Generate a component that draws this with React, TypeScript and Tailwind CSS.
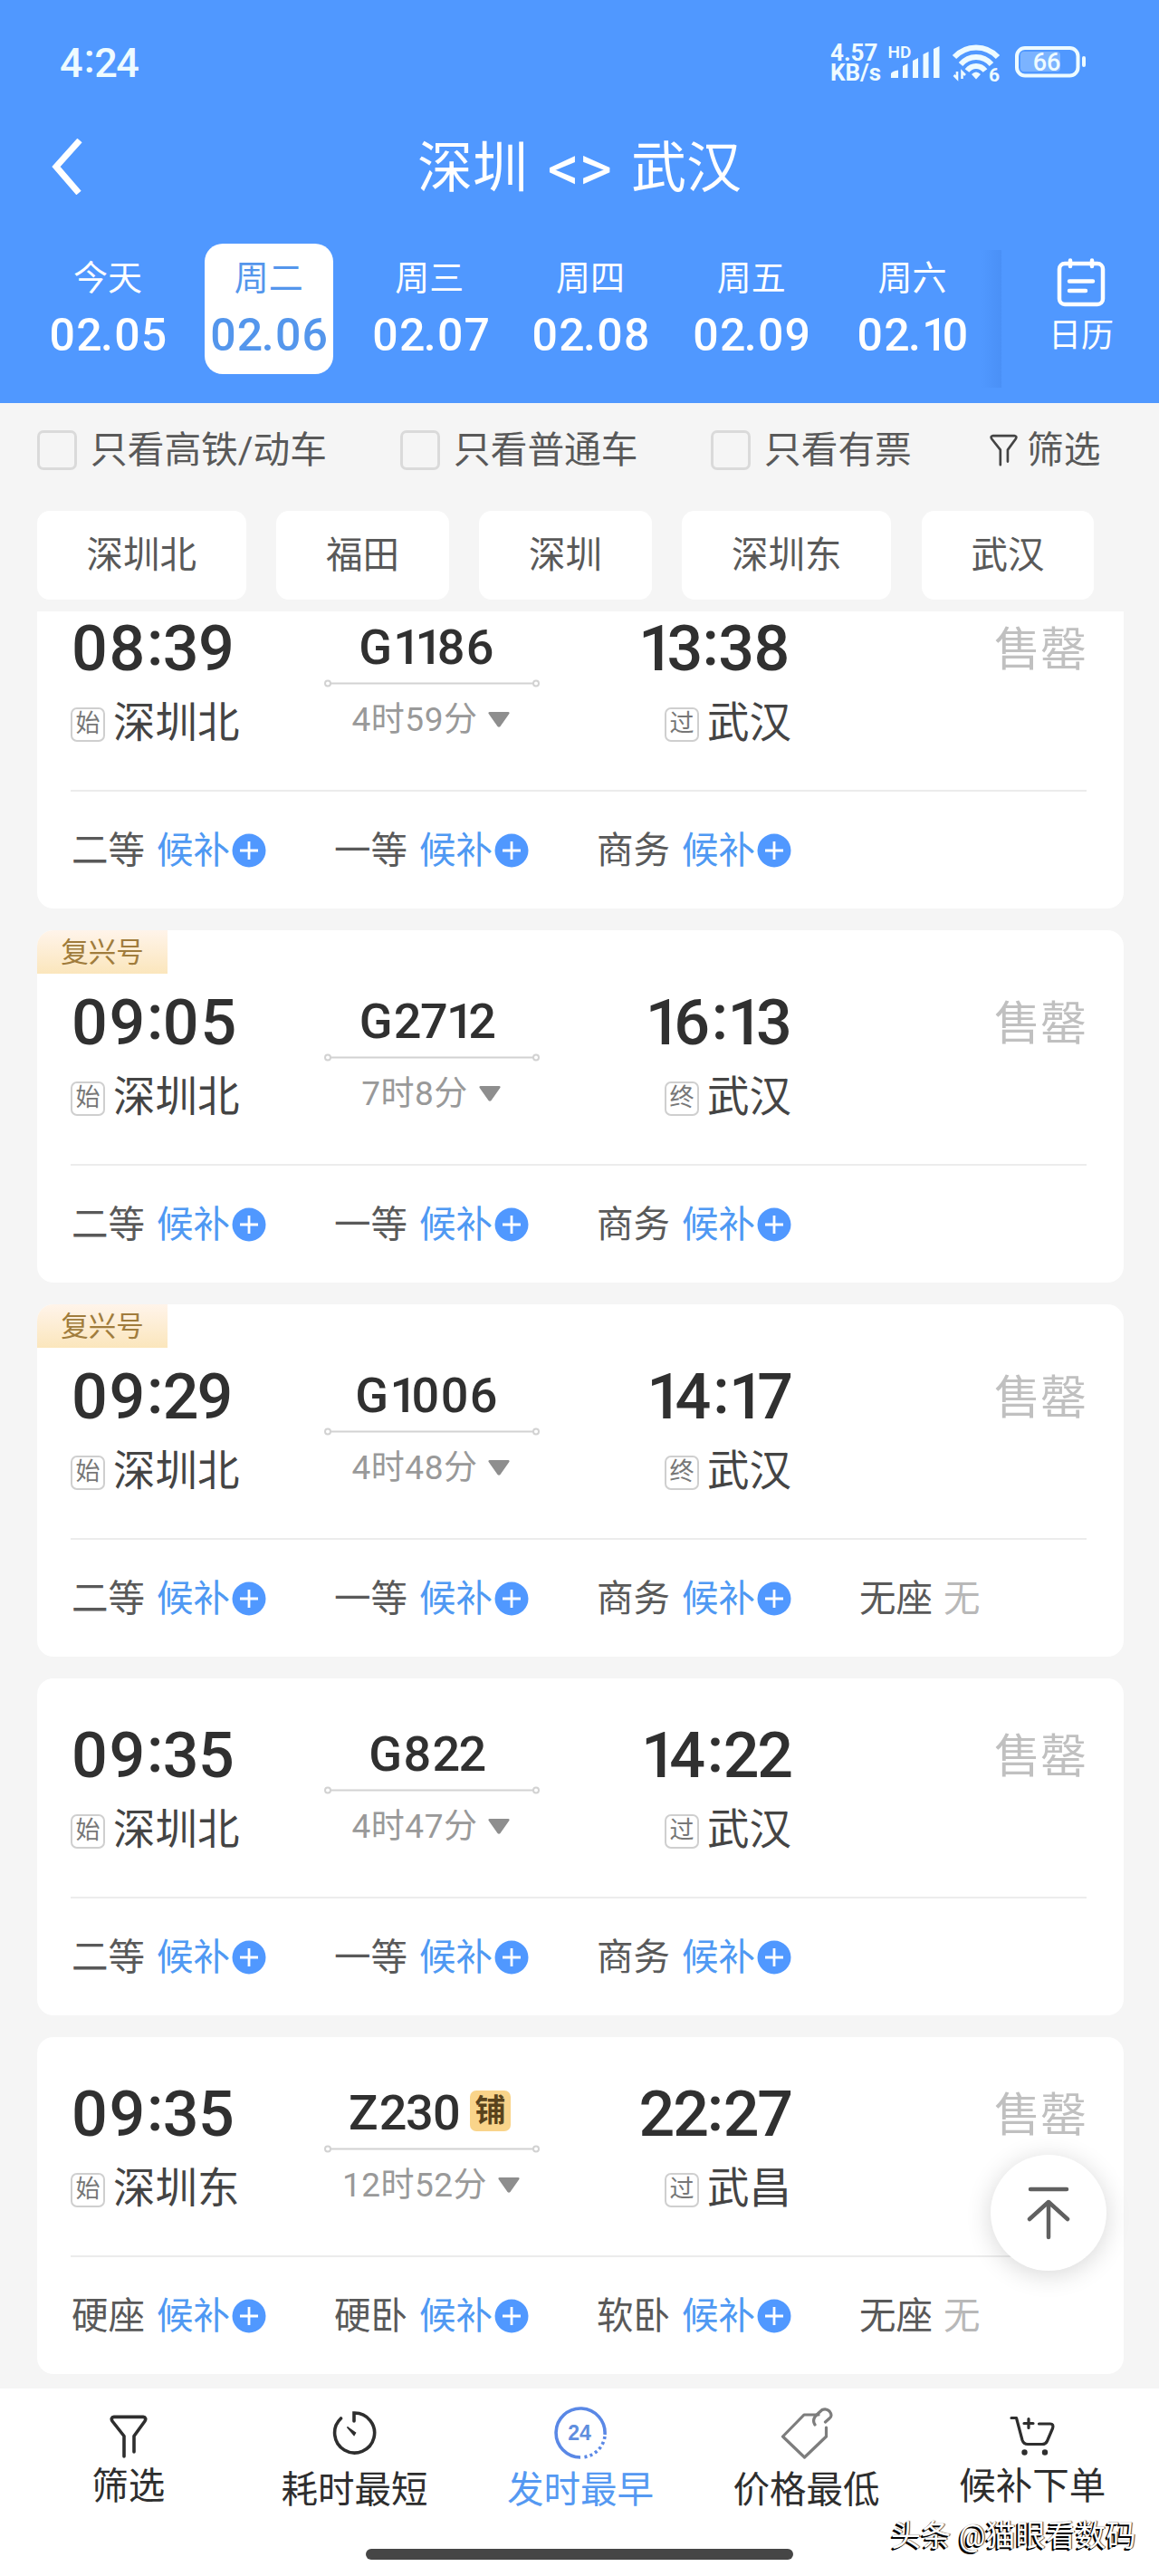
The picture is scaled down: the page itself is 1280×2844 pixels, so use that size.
import clsx from 'clsx';

const DATES = [
  { week: '今天', day: '02.05' },
  { week: '周二', day: '02.06' },
  { week: '周三', day: '02.07' },
  { week: '周四', day: '02.08' },
  { week: '周五', day: '02.09' },
  { week: '周六', day: '02.10' },
];

const STATIONS = ['深圳北', '福田', '深圳', '深圳东', '武汉'];

type Seat = { name: string; none?: boolean };

type Train = {
  no: string;
  depart: string;
  arrive: string;
  from: string;
  to: string;
  toTag: string;
  duration: string;
  fuxing?: boolean;
  sleeper?: boolean;
  seats: Seat[];
};

const HIGH_SPEED_SEATS: Seat[] = [{ name: '二等' }, { name: '一等' }, { name: '商务' }];

const TRAINS: Train[] = [
  {
    no: 'G1186',
    depart: '08:39',
    arrive: '13:38',
    from: '深圳北',
    to: '武汉',
    toTag: '过',
    duration: '4时59分',
    seats: HIGH_SPEED_SEATS,
  },
  {
    no: 'G2712',
    depart: '09:05',
    arrive: '16:13',
    from: '深圳北',
    to: '武汉',
    toTag: '终',
    duration: '7时8分',
    fuxing: true,
    seats: HIGH_SPEED_SEATS,
  },
  {
    no: 'G1006',
    depart: '09:29',
    arrive: '14:17',
    from: '深圳北',
    to: '武汉',
    toTag: '终',
    duration: '4时48分',
    fuxing: true,
    seats: [...HIGH_SPEED_SEATS, { name: '无座', none: true }],
  },
  {
    no: 'G822',
    depart: '09:35',
    arrive: '14:22',
    from: '深圳北',
    to: '武汉',
    toTag: '过',
    duration: '4时47分',
    seats: HIGH_SPEED_SEATS,
  },
  {
    no: 'Z230',
    depart: '09:35',
    arrive: '22:27',
    from: '深圳东',
    to: '武昌',
    toTag: '过',
    duration: '12时52分',
    sleeper: true,
    seats: [{ name: '硬座' }, { name: '硬卧' }, { name: '软卧' }, { name: '无座', none: true }],
  },
];

// Proportional numerals: 1, 2, 3 and 7 are set tighter than the round ones,
// and the colon is centred on the digits.
const GLYPHS: Record<string, string> = {
  '1': 'tracking-[-0.12em]',
  '2': 'tracking-[-0.03em]',
  '3': 'tracking-[-0.01em]',
  '7': 'tracking-[-0.03em]',
  ':': 'relative -top-[0.09em] inline-block leading-[0.6] tracking-[-0.01em]',
};

function Digits({ value }: { value: string }) {
  return (
    <span className="tracking-[0.025em]">
      {value.split(/([1237:])/).map((part, i) =>
        GLYPHS[part] ? (
          <span key={i} className={GLYPHS[part]}>
            {part}
          </span>
        ) : (
          part
        ),
      )}
    </span>
  );
}

function FunnelIcon({ className }: { className?: string }) {
  return (
    <svg
      viewBox="0 0 42 48"
      fill="none"
      stroke="currentColor"
      strokeWidth="3.6"
      strokeLinecap="round"
      strokeLinejoin="round"
      className={className}
    >
      <path d="M16 46V23.5L3 7Q0.8 3 5 2.4H37Q41.2 3 39 7L27 23.5V41" />
    </svg>
  );
}

function StatusIcons() {
  return (
    <svg viewBox="976 44 226 50" className="h-[50px] w-[226px] text-[#eefbff]" fill="currentColor">
      <text x="980.500" y="63.500" fontSize="19" fontWeight="600">
        HD
      </text>
      <path d="M984 86V81Q986 78 992 77.500V86ZM997 86V73L1002.500 70V86ZM1008 86V67L1014 64V86ZM1019.500 86V60L1025.500 57V86ZM1031 86V54L1037.500 51V86Z" />
      <g fill="none" stroke="currentColor" strokeWidth="6">
        <path d="M1054 63Q1064 52.500 1078 52.500T1102 63" />
        <path d="M1061 71Q1068 63 1078 63T1095 71" />
        <path d="M1068 78Q1072 73 1078 73T1088 78" />
      </g>
      <path d="M1073 82Q1078 77 1083 82L1078 87.500Z" />
      <path d="M1057 79V86.500L1053.500 83M1062.500 87V79.500L1066 83" fill="none" stroke="currentColor" strokeWidth="2.600" />
      <text x="1092" y="89.500" fontSize="21" fontWeight="700">
        6
      </text>
      <rect x="1127" y="57" width="44" height="22" rx="4" opacity="0.28" />
      <rect x="1123" y="53" width="67.500" height="30.500" rx="9" fill="none" stroke="currentColor" strokeWidth="4" />
      <rect x="1195" y="62" width="4" height="12" rx="2" />
      <text x="1156" y="78" fontSize="27" fontWeight="500" textAnchor="middle">
        66
      </text>
    </svg>
  );
}

function Header() {
  return (
    <header className="h-[445px] bg-[#5098ff] text-white">
      <div className="flex h-[138px] items-center pl-[66px] text-[#eefbff]">
        <span className="w-[851px] text-[45px] leading-none font-medium">
          <Digits value="4:24" />
        </span>
        <div className="w-[59px] text-[26px] leading-[22px] font-bold">
          <div>4.57</div>
          <div>KB/s</div>
        </div>
        <StatusIcons />
      </div>

      <div className="flex h-[92px] items-center">
        <svg
          viewBox="0 0 36 62"
          fill="none"
          stroke="currentColor"
          strokeWidth="7"
          className="ml-[56px] h-[62px] w-[36px]"
        >
          <path d="M32 2L6 31L31 60" />
        </svg>
        <h1 className="mt-[3px] ml-[369px] flex items-center text-[61px] leading-[80px] whitespace-nowrap">
          <span>深圳</span>
          <span className="ml-[20px] flex h-[80px] w-[74px] items-center justify-center text-[70px] tracking-[-0.5px]">
            &lt;&gt;
          </span>
          <span className="ml-[20px]">武汉</span>
        </h1>
      </div>

      <div className="flex">
        <div className="flex w-[1106px] gap-[35.700px] pt-[39px] pl-[48px]">
          {DATES.map((d, i) => (
            <div
              key={d.day}
              className={clsx(
                'flex h-[144px] w-[142px] shrink-0 flex-col items-center rounded-[20px] pt-[13px] whitespace-nowrap',
                i === 1 && 'bg-white text-[#5496ec]',
              )}
            >
              <span className="text-[38px] leading-[50px]">{d.week}</span>
              <span className="mt-[8px] ml-[2px] text-[50px] leading-[60px] font-medium">
                <Digits value={d.day} />
              </span>
            </div>
          ))}
        </div>
        <div className="mt-[46px] -ml-[22px] h-[152px] w-[22px] bg-linear-to-r from-[#5098ff] to-[#4a90f6]" />
        <div className="flex w-[174px] flex-col items-center pt-[55px]">
          <svg
            viewBox="0 0 54 54"
            fill="none"
            stroke="currentColor"
            strokeWidth="4.500"
            strokeLinecap="round"
            className="ml-[1px] h-[54px] w-[54px]"
          >
            <rect x="3" y="6" width="48" height="45" rx="6" />
            <path d="M15 2.500V9M39 2.500V9M14 25.500H40M14 36H32" />
          </svg>
          <span className="mt-[8px] ml-[2px] text-[36px] leading-[48px]">日历</span>
        </div>
      </div>
    </header>
  );
}

function Check({ label, className }: { label: string; className: string }) {
  return (
    <label className={clsx('flex items-center gap-[15px] whitespace-nowrap', className)}>
      <span className="size-[44px] rounded-[7px] border-[3px] border-[#dadada]" />
      {label}
    </label>
  );
}

function Filters() {
  return (
    <div className="h-[230px] text-[#595959]">
      <div className="flex h-[103px] items-center pl-[41px] text-[40.700px] leading-[50px]">
        <Check label="只看高铁/动车" className="w-[401px]" />
        <Check label="只看普通车" className="w-[343px]" />
        <Check label="只看有票" className="w-[308px]" />
        <FunnelIcon className="h-[36px] w-[31px] text-[#444]" />
        <span className="ml-[10px]">筛选</span>
      </div>
      <div className="mt-[16px] flex gap-[33.800px] pl-[41px]">
        {STATIONS.map((s) => (
          <div
            key={s}
            className="rounded-[14px] bg-white px-[54.600px] text-[40.500px] leading-[98px] whitespace-nowrap"
          >
            {s}
          </div>
        ))}
      </div>
    </div>
  );
}

function Stop({ tag, name }: { tag: string; name: string }) {
  return (
    <div className="mt-[27px] flex h-[50px] items-center gap-[9px] whitespace-nowrap">
      <span className="mt-[3px] flex size-[38px] items-center justify-center rounded-[7px] border-2 border-[#cfcfcf] text-[27px] leading-none text-[#777]">
        {tag}
      </span>
      <span className="text-[46.500px] leading-[50px] text-[#444]">{name}</span>
    </div>
  );
}

function TrainCard({ train }: { train: Train }) {
  return (
    <article
      className={clsx(
        'relative ml-[41px] w-[1200px] shrink-0 rounded-[18px] bg-white',
        train.fuxing && 'pt-[17px]',
      )}
    >
      {train.fuxing && (
        <span className="absolute top-0 left-0 h-[48px] w-[144px] rounded-tl-[18px] bg-linear-to-b from-[#fff4ea] to-[#fbe6bc] text-center text-[30.500px] leading-[50px] text-[#a07c3c]">
          复兴号
        </span>
      )}

      <div className="ml-[37px] flex h-[241px] w-[1122px] pt-[55px] text-[#303030]">
        <div className="w-[280px]">
          <div className="pl-[1px] text-[70px] leading-[60px] font-medium">
            <Digits value={train.depart} />
          </div>
          <Stop tag="始" name={train.from} />
        </div>

        <div className="flex w-[238px] flex-col items-center">
          <div className="-mt-[1px] flex h-[60px] items-center gap-[9px] pr-[11px] text-[54px] leading-[60px] font-medium">
            <span>
              <Digits value={train.no} />
            </span>
            {train.sleeper && (
              <span className="-mr-[6px] mb-[5px] size-[45px] rounded-[7px] bg-[#f9d48a] text-center text-[34px] leading-[45px] font-bold text-[#59431c]">
                铺
              </span>
            )}
          </div>
          <svg viewBox="0 0 238 9" fill="none" stroke="#d2d2d2" strokeWidth="2" className="mt-[5px] h-[9px] w-[238px]">
            <circle cx="4" cy="4.500" r="3" />
            <circle cx="234" cy="4.500" r="3" />
            <path d="M7 4.500H231" />
          </svg>
          <div className="mt-[11px] flex h-[50px] items-center gap-[12px] pr-[2px] text-[37px] leading-[50px] whitespace-nowrap text-[#999]">
            <span className="tracking-[0.5px]">{train.duration}</span>
            <svg viewBox="0 0 24 17" className="mb-[2px] h-[17px] w-[24px]" fill="#8e8e8e">
              <path d="M1.500 0H22.500Q24.500 0.500 23 2.500L13.500 16Q12 17.500 10.500 16L1 2.500Q-0.500 0.500 1.500 0Z" />
            </svg>
          </div>
        </div>

        <div className="flex w-[278px] flex-col items-end">
          <div className="text-[70px] leading-[60px] font-medium">
            <Digits value={train.arrive} />
          </div>
          <Stop tag={train.toTag} name={train.to} />
        </div>

        <div className="flex-1 text-right text-[51px] leading-[64px] text-[#c0c0c0]">售罄</div>
      </div>

      <div className="ml-[37px] h-[2px] w-[1122px] bg-[#ececec]" />

      <div className="ml-[38px] flex h-[129px] items-center text-[40.500px] leading-[50px] whitespace-nowrap text-[#595959]">
        {train.seats.map((seat) => (
          <div key={seat.name} className="flex w-[290px] items-center">
            {seat.name}
            {seat.none ? (
              <span className="ml-[12px] text-[#b8b8b8]">无</span>
            ) : (
              <>
                <span className="ml-[13px] text-[#4f99f3]">候补</span>
                <svg viewBox="0 0 38 38" className="mt-[1px] ml-[2px] size-[38px]">
                  <circle cx="19" cy="19" r="18.500" fill="#5098ff" />
                  <path d="M19 9V29M9 19H29" stroke="#fff" strokeWidth="2.800" />
                </svg>
              </>
            )}
          </div>
        ))}
      </div>
    </article>
  );
}

function BackToTop() {
  return (
    <button
      type="button"
      className="absolute top-[2379px] left-[1094px] flex size-[128px] items-center justify-center rounded-full bg-white shadow-[0_4px_28px_rgba(0,0,0,0.16)]"
    >
      <svg
        viewBox="0 0 48 60"
        fill="none"
        stroke="#606060"
        strokeWidth="4.500"
        strokeLinecap="round"
        strokeLinejoin="round"
        className="h-[60px] w-[48px]"
      >
        <path d="M4 4H44M24 57V18M3 37L24 18L45 37" />
      </svg>
    </button>
  );
}

function TimerIcon() {
  return (
    <svg viewBox="0 0 50 50" fill="none" stroke="currentColor" strokeWidth="3.600" strokeLinecap="round" className="size-[50px]">
      <path d="M25 12V3A22 22 0 1 1 10.500 9" />
      <path d="M17.500 18.500L26.500 25L25 27.500Z" fill="currentColor" strokeWidth="1.500" />
    </svg>
  );
}

function EarliestIcon() {
  return (
    <svg viewBox="0 0 58 58" fill="none" stroke="#5a88e6" strokeWidth="3.600" className="size-[58px]">
      <path d="M29 56A27 27 0 1 1 56 31" />
      <path d="M56 33A27 27 0 0 1 31 56" strokeDasharray="3 3.200" />
      <text x="28" y="37" fontSize="23" fontWeight="700" textAnchor="middle" fill="#5f8ede" stroke="none" className="font-['Liberation_Sans',sans-serif]">
        24
      </text>
    </svg>
  );
}

function PriceIcon() {
  return (
    <svg viewBox="0 0 58 58" fill="none" stroke="#7d7d7d" strokeWidth="3.200" strokeLinecap="round" strokeLinejoin="round" className="size-[58px]">
      <path d="M42 9H26L2.500 33L26.500 56L50.500 33V23" />
      <path d="M38 20Q34 14 41 8L46 3.500Q50.500 1.500 54 5Q58 10 54 13L49.500 17" />
    </svg>
  );
}

function CartIcon() {
  return (
    <svg viewBox="0 0 50 44" fill="none" stroke="currentColor" strokeWidth="3.200" strokeLinecap="round" strokeLinejoin="round" className="mt-[5px] h-[44px] w-[50px]">
      <path d="M2 2.500H7.500L14 27Q15.500 31.500 20 31.500H36Q40 31.500 41.500 28L47.500 14Q49 9 45 9H32.500" />
      <path d="M21 3.500V13.500M16 8.500H26" />
      <circle cx="16.500" cy="40.500" r="1.600" fill="currentColor" />
      <circle cx="39" cy="40.500" r="1.600" fill="currentColor" />
    </svg>
  );
}

const TABS = [
  { label: '筛选', Icon: () => <FunnelIcon className="mt-[7px] h-[48px] w-[42px]" />, low: false },
  { label: '耗时最短', Icon: TimerIcon, low: true },
  { label: '发时最早', Icon: EarliestIcon, low: true, active: true },
  { label: '价格最低', Icon: PriceIcon, low: true },
  { label: '候补下单', Icon: CartIcon, low: false },
];

function BottomBar() {
  return (
    <footer className="relative h-[207px] bg-white text-[#2e2e2e]">
      <nav className="flex pt-[19px] pr-[15px] pl-[17px]">
        {TABS.map(({ label, Icon, low, active }) => (
          <div key={label} className={clsx('flex flex-1 flex-col items-center', active && 'text-[#5599f2]')}>
            <div className="flex h-[60px] items-center">
              <Icon />
            </div>
            <span className={clsx('text-[40.500px] leading-[50px]', low ? 'mt-[8px]' : 'mt-[4px]')}>{label}</span>
          </div>
        ))}
      </nav>
      <div className="absolute top-[177px] left-[404px] h-[12px] w-[472px] rounded-full bg-[#464646]" />
      <span className="absolute top-[141px] left-[984px] text-[33px] leading-[44px] tracking-[0.2px] whitespace-nowrap text-white [text-shadow:-2px_2px_0_#000,-1px_1px_0_#000,1px_0_1px_#333]">
        头条 @猫眼看数码
      </span>
    </footer>
  );
}

export default function App() {
  return (
    <div className="relative flex h-[2844px] w-[1280px] flex-col overflow-hidden bg-[#f5f5f5] font-[Roboto,'Noto_Sans_CJK_SC',sans-serif]">
      <Header />
      <Filters />
      {/* The list is scrolled a little, so the first card is cut off at the top. */}
      <main className="h-[1962px] overflow-hidden">
        <div className="-mt-[44px] flex flex-col gap-[24px]">
          {TRAINS.map((t) => (
            <TrainCard key={t.no} train={t} />
          ))}
        </div>
      </main>
      <BottomBar />
      <BackToTop />
    </div>
  );
}
